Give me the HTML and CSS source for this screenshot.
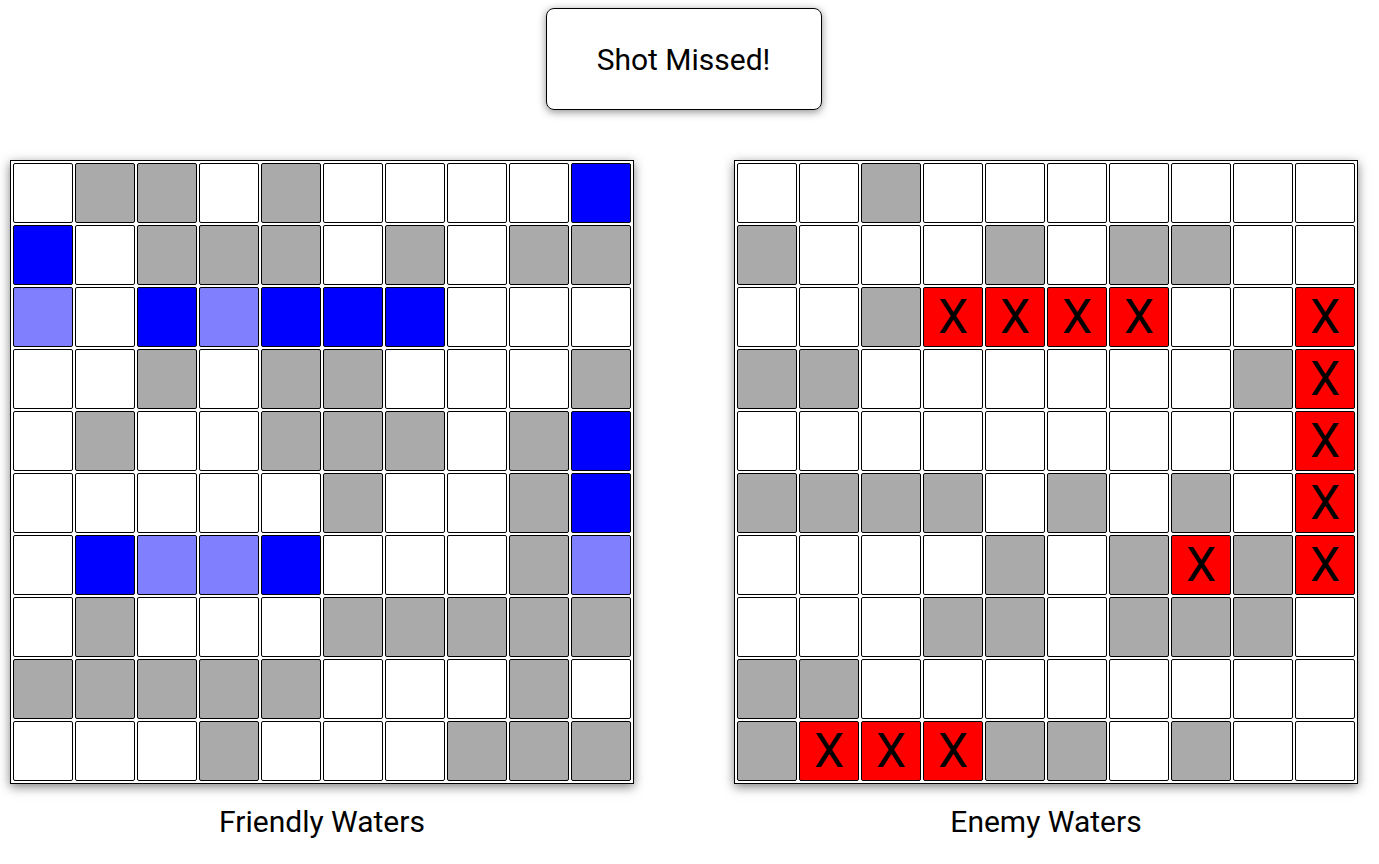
FILE: index.html
```html
<!DOCTYPE html>
<html>
<head>
<meta charset="utf-8">
<link rel="stylesheet" href="styles.css">
</head>
<body>
<div class="top"><div class="status">Shot Missed!</div></div>
<div class="boards">
  <div class="side">
    <div class="board" id="friendly"></div>
    <div class="label">Friendly Waters</div>
  </div>
  <div class="side">
    <div class="board" id="enemy"></div>
    <div class="label">Enemy Waters</div>
  </div>
</div>
<script src="script.js"></script>
</body>
</html>
```
FILE: styles.css
```css
html, body { margin: 0; padding: 0; background: #fff; }
body { font-family: Roboto, "Liberation Sans", sans-serif; color: #000; }
.top { display: flex; justify-content: center; padding: 8px 12px 0 0; height: 160px; box-sizing: border-box; }
.status {
  width: 276px; height: 102px; box-sizing: border-box;
  border: 1px solid #000; border-radius: 8px;
  display: flex; align-items: center; justify-content: center;
  font-size: 30px;
  box-shadow: 0 2px 8px rgba(0,0,0,0.45);
}
.boards { display: flex; padding-left: 10px; gap: 100px; }
.side { display: flex; flex-direction: column; }
.board {
  display: grid; grid-template-columns: repeat(10, 60px); grid-auto-rows: 60px;
  gap: 2px; padding: 2px; border: 1px solid #000;
  box-shadow: 0 3px 10px rgba(0,0,0,0.5);
}
.cell {
  box-sizing: border-box; border: 1px solid #000; border-radius: 2px;
  background: #fff; display: flex; align-items: center; justify-content: center;
  font-size: 48px; line-height: 1;
}
.cell.g { background: #aaa; }
.cell.b { background: #00f; }
.cell.l { background: #8080ff; }
.cell.x { background: #f00; }
.label { text-align: center; font-size: 30px; margin-top: 20px; }
```
FILE: script.js
```js
var friendly = [
  "WGGWGWWWWB",
  "BWGGGWGWGG",
  "LWBLBBBWWW",
  "WWGWGGWWWG",
  "WGWWGGGWGB",
  "WWWWWGWWGB",
  "WBLLBWWWGL",
  "WGWWWGGGGG",
  "GGGGGWWWGW",
  "WWWGWWWGGG"
];
var enemy = [
  "WWGWWWWWWW",
  "GWWWGWGGWW",
  "WWGXXXXWWX",
  "GGWWWWWWGX",
  "WWWWWWWWWX",
  "GGGGWGWGWX",
  "WWWWGWGXGX",
  "WWWGGWGGGW",
  "GGWWWWWWWW",
  "GXXXGGWGWW"
];
function build(id, data) {
  var el = document.getElementById(id);
  data.forEach(function (row) {
    for (var i = 0; i < row.length; i++) {
      var c = document.createElement("div");
      var t = row[i];
      c.className = "cell" + (t === "W" ? "" : " " + t.toLowerCase());
      if (t === "X") c.textContent = "X";
      el.appendChild(c);
    }
  });
}
build("friendly", friendly);
build("enemy", enemy);
```
